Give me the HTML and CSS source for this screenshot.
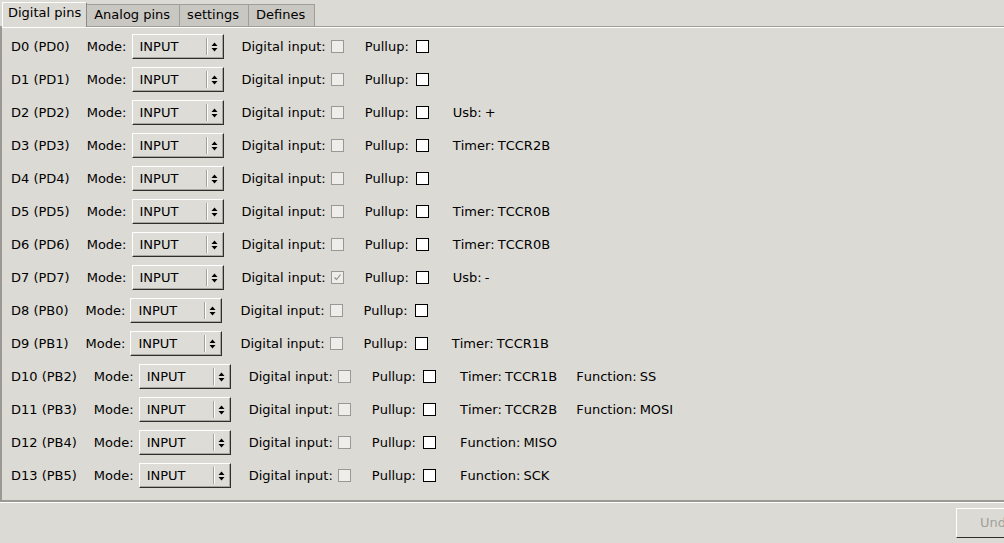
FILE: index.html
```html
<!DOCTYPE html>
<html>
<head>
<meta charset="utf-8">
<link rel="stylesheet" href="styles.css">
</head>
<body>
<div class="tabbar">
  <div class="tab active">Digital pins</div>
  <div class="tab">Analog pins</div>
  <div class="tab">settings</div>
  <div class="tab">Defines</div>
</div>
<div class="panel">
  <div class="row"><span class="pin">D0 (PD0)</span><span class="mode">Mode:</span><div class="combo"><span class="val">INPUT</span><span class="sep"></span><span class="arrows"><svg width="7" height="12" viewBox="0 0 7 12"><path d="M0.5 5 L3.5 1.5 L6.5 5 Z M0.5 7 L3.5 10.5 L6.5 7 Z" fill="#000"/></svg></span></div><span class="di">Digital input:</span><span class="cb dis"></span><span class="pu">Pullup:</span><span class="cb on"></span></div>
  <div class="row"><span class="pin">D1 (PD1)</span><span class="mode">Mode:</span><div class="combo"><span class="val">INPUT</span><span class="sep"></span><span class="arrows"><svg width="7" height="12" viewBox="0 0 7 12"><path d="M0.5 5 L3.5 1.5 L6.5 5 Z M0.5 7 L3.5 10.5 L6.5 7 Z" fill="#000"/></svg></span></div><span class="di">Digital input:</span><span class="cb dis"></span><span class="pu">Pullup:</span><span class="cb on"></span></div>
  <div class="row"><span class="pin">D2 (PD2)</span><span class="mode">Mode:</span><div class="combo"><span class="val">INPUT</span><span class="sep"></span><span class="arrows"><svg width="7" height="12" viewBox="0 0 7 12"><path d="M0.5 5 L3.5 1.5 L6.5 5 Z M0.5 7 L3.5 10.5 L6.5 7 Z" fill="#000"/></svg></span></div><span class="di">Digital input:</span><span class="cb dis"></span><span class="pu">Pullup:</span><span class="cb on"></span><span class="extra">Usb:<span class="v">+</span></span></div>
  <div class="row"><span class="pin">D3 (PD3)</span><span class="mode">Mode:</span><div class="combo"><span class="val">INPUT</span><span class="sep"></span><span class="arrows"><svg width="7" height="12" viewBox="0 0 7 12"><path d="M0.5 5 L3.5 1.5 L6.5 5 Z M0.5 7 L3.5 10.5 L6.5 7 Z" fill="#000"/></svg></span></div><span class="di">Digital input:</span><span class="cb dis"></span><span class="pu">Pullup:</span><span class="cb on"></span><span class="extra">Timer:<span class="v">TCCR2B</span></span></div>
  <div class="row"><span class="pin">D4 (PD4)</span><span class="mode">Mode:</span><div class="combo"><span class="val">INPUT</span><span class="sep"></span><span class="arrows"><svg width="7" height="12" viewBox="0 0 7 12"><path d="M0.5 5 L3.5 1.5 L6.5 5 Z M0.5 7 L3.5 10.5 L6.5 7 Z" fill="#000"/></svg></span></div><span class="di">Digital input:</span><span class="cb dis"></span><span class="pu">Pullup:</span><span class="cb on"></span></div>
  <div class="row"><span class="pin">D5 (PD5)</span><span class="mode">Mode:</span><div class="combo"><span class="val">INPUT</span><span class="sep"></span><span class="arrows"><svg width="7" height="12" viewBox="0 0 7 12"><path d="M0.5 5 L3.5 1.5 L6.5 5 Z M0.5 7 L3.5 10.5 L6.5 7 Z" fill="#000"/></svg></span></div><span class="di">Digital input:</span><span class="cb dis"></span><span class="pu">Pullup:</span><span class="cb on"></span><span class="extra">Timer:<span class="v">TCCR0B</span></span></div>
  <div class="row"><span class="pin">D6 (PD6)</span><span class="mode">Mode:</span><div class="combo"><span class="val">INPUT</span><span class="sep"></span><span class="arrows"><svg width="7" height="12" viewBox="0 0 7 12"><path d="M0.5 5 L3.5 1.5 L6.5 5 Z M0.5 7 L3.5 10.5 L6.5 7 Z" fill="#000"/></svg></span></div><span class="di">Digital input:</span><span class="cb dis"></span><span class="pu">Pullup:</span><span class="cb on"></span><span class="extra">Timer:<span class="v">TCCR0B</span></span></div>
  <div class="row"><span class="pin">D7 (PD7)</span><span class="mode">Mode:</span><div class="combo"><span class="val">INPUT</span><span class="sep"></span><span class="arrows"><svg width="7" height="12" viewBox="0 0 7 12"><path d="M0.5 5 L3.5 1.5 L6.5 5 Z M0.5 7 L3.5 10.5 L6.5 7 Z" fill="#000"/></svg></span></div><span class="di">Digital input:</span><span class="cb dis"><svg width="11" height="11" viewBox="0 0 11 11"><path d="M2.5 5.5 L4.5 7.5 L8.5 2.5" fill="none" stroke="#8c8a85" stroke-width="1.1"/></svg></span><span class="pu">Pullup:</span><span class="cb on"></span><span class="extra">Usb:<span class="v">-</span></span></div>
  <div class="row"><span class="pin">D8 (PB0)</span><span class="mode">Mode:</span><div class="combo"><span class="val">INPUT</span><span class="sep"></span><span class="arrows"><svg width="7" height="12" viewBox="0 0 7 12"><path d="M0.5 5 L3.5 1.5 L6.5 5 Z M0.5 7 L3.5 10.5 L6.5 7 Z" fill="#000"/></svg></span></div><span class="di">Digital input:</span><span class="cb dis"></span><span class="pu">Pullup:</span><span class="cb on"></span></div>
  <div class="row"><span class="pin">D9 (PB1)</span><span class="mode">Mode:</span><div class="combo"><span class="val">INPUT</span><span class="sep"></span><span class="arrows"><svg width="7" height="12" viewBox="0 0 7 12"><path d="M0.5 5 L3.5 1.5 L6.5 5 Z M0.5 7 L3.5 10.5 L6.5 7 Z" fill="#000"/></svg></span></div><span class="di">Digital input:</span><span class="cb dis"></span><span class="pu">Pullup:</span><span class="cb on"></span><span class="extra">Timer:<span class="v">TCCR1B</span></span></div>
  <div class="row"><span class="pin">D10 (PB2)</span><span class="mode">Mode:</span><div class="combo"><span class="val">INPUT</span><span class="sep"></span><span class="arrows"><svg width="7" height="12" viewBox="0 0 7 12"><path d="M0.5 5 L3.5 1.5 L6.5 5 Z M0.5 7 L3.5 10.5 L6.5 7 Z" fill="#000"/></svg></span></div><span class="di">Digital input:</span><span class="cb dis"></span><span class="pu">Pullup:</span><span class="cb on"></span><span class="extra">Timer:<span class="v">TCCR1B</span></span><span class="extra fn">Function:<span class="v">SS</span></span></div>
  <div class="row"><span class="pin">D11 (PB3)</span><span class="mode">Mode:</span><div class="combo"><span class="val">INPUT</span><span class="sep"></span><span class="arrows"><svg width="7" height="12" viewBox="0 0 7 12"><path d="M0.5 5 L3.5 1.5 L6.5 5 Z M0.5 7 L3.5 10.5 L6.5 7 Z" fill="#000"/></svg></span></div><span class="di">Digital input:</span><span class="cb dis"></span><span class="pu">Pullup:</span><span class="cb on"></span><span class="extra">Timer:<span class="v">TCCR2B</span></span><span class="extra fn">Function:<span class="v">MOSI</span></span></div>
  <div class="row"><span class="pin">D12 (PB4)</span><span class="mode">Mode:</span><div class="combo"><span class="val">INPUT</span><span class="sep"></span><span class="arrows"><svg width="7" height="12" viewBox="0 0 7 12"><path d="M0.5 5 L3.5 1.5 L6.5 5 Z M0.5 7 L3.5 10.5 L6.5 7 Z" fill="#000"/></svg></span></div><span class="di">Digital input:</span><span class="cb dis"></span><span class="pu">Pullup:</span><span class="cb on"></span><span class="extra">Function:<span class="v">MISO</span></span></div>
  <div class="row"><span class="pin">D13 (PB5)</span><span class="mode">Mode:</span><div class="combo"><span class="val">INPUT</span><span class="sep"></span><span class="arrows"><svg width="7" height="12" viewBox="0 0 7 12"><path d="M0.5 5 L3.5 1.5 L6.5 5 Z M0.5 7 L3.5 10.5 L6.5 7 Z" fill="#000"/></svg></span></div><span class="di">Digital input:</span><span class="cb dis"></span><span class="pu">Pullup:</span><span class="cb on"></span><span class="extra">Function:<span class="v">SCK</span></span></div>
</div>
<div class="bottombar">
  <div class="btn">Undo</div>
</div>
</body>
</html>
```
FILE: styles.css
```css
* { box-sizing: border-box; }
html, body { margin: 0; padding: 0; }
body {
  width: 1004px;
  height: 543px;
  overflow: hidden;
  background: #dcdad5;
  font-family: "DejaVu Sans", sans-serif;
  font-size: 13px;
  line-height: 15px;
  color: #000;
  font-kerning: none;
}

.tabbar {
  display: flex;
  align-items: flex-end;
  height: 26px;
  padding-left: 2px;
  position: relative;
  z-index: 1;
}
.tab {
  height: 22px;
  padding: 2px 9px 0 7px;
  background: #c9c7c2;
  border: 1px solid #a09e99;
  border-bottom: none;
  border-right: none;
  white-space: nowrap;
}
.tab:last-child { border-right: 1px solid #a09e99; }
.tab.active {
  height: 25px;
  margin-bottom: -1px;
  padding: 2px 5px 0 5px;
  background: #dcdad5;
  border-top: 1px solid #ffffff;
  border-left: 1px solid #ffffff;
  border-right: 1px solid #8e8c87;
}
.tab.active + .tab { border-left: none; }

.panel {
  height: 476px;
  border-top: 1px solid #a09e99;
  border-left: 2px solid #9b9994;
  border-bottom: 2px solid #9b9994;
  box-shadow: inset 0 1px 0 #ffffff;
  padding: 7px 0 0 9px;
  display: flex;
  flex-direction: column;
  gap: 8px;
}

.row {
  display: flex;
  align-items: center;
  height: 25px;
  white-space: nowrap;
}
.mode { margin-left: 17px; }
.combo {
  margin-left: 5px;
  width: 92px;
  height: 25px;
  flex: none;
  display: flex;
  align-items: center;
  border-top: 1px solid #ffffff;
  border-left: 1px solid #ffffff;
  border-right: 1px solid #2f2e2b;
  border-bottom: 1px solid #2f2e2b;
  box-shadow: inset -1px -1px 0 #a8a6a1;
  background: #dedcd7;
  padding-left: 7px;
}
.combo .val { width: 66px; flex: none; }
.combo .sep {
  width: 1px;
  height: 17px;
  background: #a3a19c;
  box-shadow: 1px 0 0 #ffffff;
  flex: none;
}
.combo .arrows {
  flex: 1;
  display: flex;
  justify-content: center;
  align-items: center;
  padding-right: 1px;
}
.combo .arrows svg { display: block; }

.di { margin-left: 18px; }
.pu { margin-left: 21px; }
.cb {
  width: 13px;
  height: 13px;
  flex: none;
  display: flex;
  align-items: center;
  justify-content: center;
}
.cb.dis {
  margin-left: 5px;
  border: 1px solid #9a9894;
  background: #eeede9;
}
.cb.on {
  margin-left: 7px;
  border: 1px solid #000000;
  background: #ffffff;
}
.cb svg { display: block; }
.extra { margin-left: 24px; }
.extra .v { margin-left: 3px; }
.extra.fn { margin-left: 19px; }

.bottombar {
  border-top: 1px solid #ffffff;
  padding-top: 5px;
  display: flex;
  justify-content: flex-end;
}
.btn {
  width: 82px;
  height: 30px;
  flex: none;
  margin-right: -34px;
  display: flex;
  align-items: center;
  justify-content: center;
  color: #a19f9a;
  border-top: 1px solid #ffffff;
  border-left: 1px solid #ffffff;
  border-bottom: 1px solid #2f2e2b;
  border-right: 1px solid #2f2e2b;
  padding-bottom: 1px;
}
```
